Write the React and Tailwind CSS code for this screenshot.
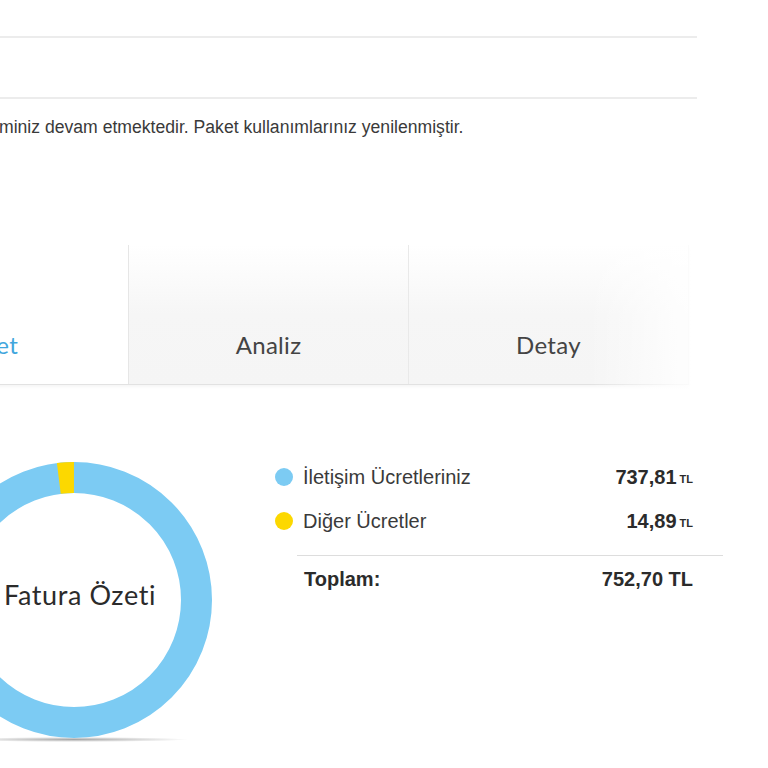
import React from 'react';

const tabs = [
  { name: 'Paket', active: true },
  { name: 'Analiz', active: false },
  { name: 'Detay', active: false },
];

const items = [
  { label: 'İletişim Ücretleriniz', value: '737,81', color: 'bg-[#7ccbf3]' },
  { label: 'Diğer Ücretler', value: '14,89', color: 'bg-[#fcd800]' },
];

const Donut = () => {
  const r = 122.5;
  const c = 2 * Math.PI * r;
  const other = 14.89 / 752.7;
  return (
    <svg width="276" height="276" viewBox="0 0 276 276">
      <circle cx="138" cy="138" r={r} fill="none" stroke="#7ccbf3" strokeWidth="31" />
      <circle
        cx="138"
        cy="138"
        r={r}
        fill="none"
        stroke="#fcd800"
        strokeWidth="31"
        strokeDasharray={`${c * other} ${c}`}
        transform={`rotate(${-90 - other * 360} 138 138)`}
      />
    </svg>
  );
};

const App = () => {
  return (
    <div className="w-[768px] h-[768px] overflow-hidden bg-white font-['Liberation_Sans',Arial,sans-serif]">
      {/* header lines */}
      <div className="pt-[36px] w-[697px]">
        <div className="h-[2px] bg-[#ececec]" />
        <div className="h-[59px]" />
        <div className="h-[2px] bg-[#ececec]" />
      </div>

      <p className="mt-[18px] -ml-[1px] text-[17.6px] leading-[20px] text-[#3a3a3a] whitespace-nowrap">
        miniz devam etmektedir. Paket kullanımlarınız yenilenmiştir.
      </p>

      {/* tabs */}
      <div className="relative mt-[108px] w-[768px]">
        <div className="flex -ml-[152px] h-[140px] border-b border-[#e2e2e2] w-[841px] shadow-[0_2px_3px_rgba(0,0,0,0.04)]">
          {tabs.map((tab) => (
            <div
              key={tab.name}
              className={
                tab.active
                  ? "w-[281px] flex items-end justify-center pb-[21px] bg-white border-r border-[#e6e6e6]"
                  : "w-[280px] flex items-end justify-center pb-[21px] bg-gradient-to-b from-white via-[#f6f6f6] to-[#f5f5f5] border-r border-[#e9e9e9]"
              }
            >
              <span
                className={
                  tab.active
                    ? "font-['Lato',sans-serif] text-[24px] tracking-[0.3px] text-[#41a6dd]"
                    : "font-['Lato',sans-serif] text-[24px] tracking-[0.3px] text-[#444]"
                }
              >
                {tab.name}
              </span>
            </div>
          ))}
        </div>
        {/* right fade */}
        <div className="absolute right-0 top-0 h-[146px] w-[180px] bg-gradient-to-r from-transparent via-white/80 to-white" />
      </div>

      {/* summary */}
      <div className="mt-[77px] flex">
        <div className="-ml-[64px] flex flex-col items-center">
          <div className="relative w-[276px] h-[276px]">
            <Donut />
            <div className="absolute inset-0 flex items-center justify-center pl-[12px] pb-[10px]">
              <span className="font-['Lato',sans-serif] text-[27px] tracking-[0.6px] text-[#2b2b2b]">Fatura Özeti</span>
            </div>
          </div>
          <div className="h-[5px] w-[230px] -mt-[1px] bg-[radial-gradient(ellipse_at_center,rgba(0,0,0,0.35),transparent_70%)]" />
        </div>

        <div className="ml-[63px] -mt-[7px] w-[448px]">
          {items.map((item) => (
            <div key={item.label} className="flex items-center h-[44px] w-[418px]">
              <span className={`w-[18px] h-[18px] rounded-full ${item.color}`} />
              <span className="ml-[10px] text-[20px] text-[#3a3a3a]">{item.label}</span>
              <span className="ml-auto text-[20px] font-bold text-[#2b2b2b]">{item.value}</span>
              <span className="ml-[3px] text-[11px] font-bold text-[#2b2b2b] mt-[4px]">TL</span>
            </div>
          ))}
          <div className="ml-[22px] mt-[12px] h-[1px] w-[426px] bg-[#dddddd]" />
          <div className="flex items-center h-[46px] w-[418px] pl-[29px]">
            <span className="text-[20px] font-bold text-[#2b2b2b]">Toplam:</span>
            <span className="ml-auto text-[20px] font-bold text-[#2b2b2b]">752,70 TL</span>
          </div>
        </div>
      </div>
    </div>
  );
};

export default App;
